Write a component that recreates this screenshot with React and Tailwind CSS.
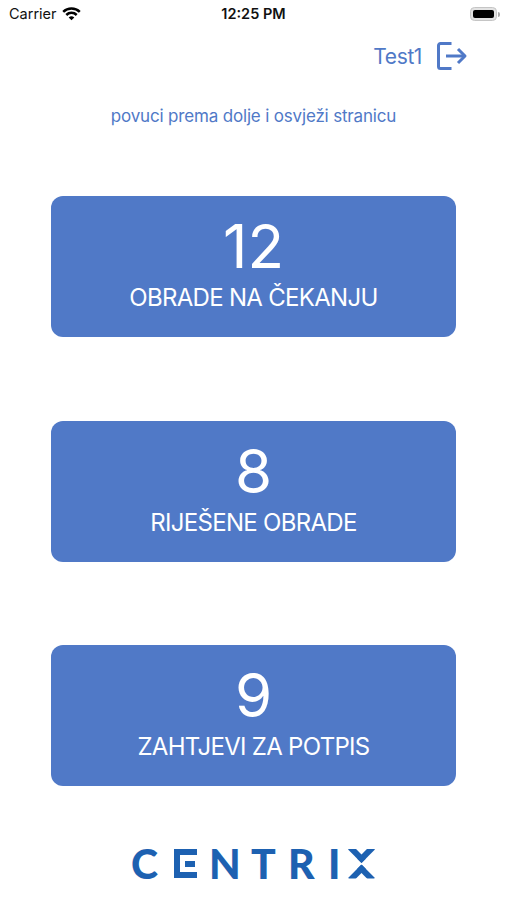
const cards = [
  { count: 12, label: 'OBRADE NA ČEKANJU' },
  { count: 8, label: 'RIJEŠENE OBRADE' },
  { count: 9, label: 'ZAHTJEVI ZA POTPIS' },
]

export default function App() {
  return (
    <div className="flex h-[900px] w-[507px] flex-col overflow-hidden bg-white font-['Inter',sans-serif] text-[#5079c7]">
      <StatusBar />

      <header className="flex h-14 items-center justify-end pr-[39px]">
        <span className="mr-[14px] text-[21px] leading-none tracking-[-0.4px]">Test1</span>
        <LogoutIcon />
      </header>

      <p className="mt-[20px] text-center text-[17px] leading-6 tracking-[-0.17px]">
        povuci prema dolje i osvježi stranicu
      </p>

      <main className="mt-[68px] flex flex-col gap-[83.7px] px-[51px]">
        {cards.map((card) => (
          <CountCard key={card.label} {...card} />
        ))}
      </main>

      <Logo />
    </div>
  )
}

function StatusBar() {
  return (
    <div className="grid h-7 shrink-0 grid-cols-3 items-center text-[14.5px] leading-none text-[#111]">
      <div className="flex items-center gap-[5px] pl-[9px]">
        <span>Carrier</span>
        <WifiIcon />
      </div>
      <span className="text-center font-semibold">12:25 PM</span>
      <div className="flex items-center justify-end gap-px pr-[7px]">
        <div className="h-[14px] w-[27px] rounded-[4.5px] border border-[#c5c5c5] bg-[#e2e2e2] p-[2px]">
          <div className="h-full rounded-[2px] bg-black" />
        </div>
        <div className="h-[5px] w-[2px] rounded-r-full bg-[#aaa]" />
      </div>
    </div>
  )
}

function CountCard({ count, label }) {
  return (
    <section className="flex h-[141px] w-[405px] flex-col items-center rounded-xl bg-[#5079c7] pt-[20px] text-white">
      <span className="text-[60px] leading-[60px]">{count}</span>
      <span className="mt-[6px] text-[24px] leading-8 tracking-[-0.7px] whitespace-nowrap">
        {label}
      </span>
    </section>
  )
}

// The E is an open frame with a loose bar, the X two facing chevrons
function Logo() {
  return (
    <div
      className="mt-[58px] ml-[131px] flex font-['Lato',sans-serif] text-[41px] leading-[40px] font-black text-[#1d61b1]"
      aria-label="CENTRIX"
    >
      <span className="w-[43px]">C</span>
      <span className="mt-[5px] mr-[12px] flex h-[29px] w-[23px] items-center justify-end border-y-[6px] border-l-[6px] border-current pr-[2px]">
        <i className="h-[6px] w-[10px] bg-current" />
      </span>
      <span className="w-[42px]">N</span>
      <span className="w-[37px]">T</span>
      <span className="w-[40px]">R</span>
      <span className="w-[20px]">I</span>
      <span className="mt-[5px] flex h-[29px] w-[27px] flex-col justify-between">
        <Chevron />
        <Chevron className="rotate-180" />
      </span>
    </div>
  )
}

function Chevron({ className = '' }) {
  return (
    <span className={`flex h-[13.5px] justify-center overflow-hidden ${className}`}>
      <i className="-mt-[9.5px] size-[19px] shrink-0 rotate-45 border-r-[6px] border-b-[6px] border-current" />
    </span>
  )
}

function WifiIcon() {
  return (
    <svg width="19" height="14" viewBox="0 0 19 14" fill="none" stroke="#000" strokeWidth="2.5">
      <path d="M1.2 4.8a11.8 11.8 0 0 1 16.6 0" />
      <path d="M4.3 8a7.4 7.4 0 0 1 10.4 0" />
      <path d="M9.5 13.3 6.7 10.5a4 4 0 0 1 5.6 0Z" fill="#000" stroke="none" />
    </svg>
  )
}

function LogoutIcon() {
  return (
    <svg
      width="32"
      height="30"
      viewBox="0 0 32 30"
      fill="none"
      stroke="currentColor"
      strokeWidth="3"
      strokeLinejoin="round"
    >
      <path d="M15.5 2.5H4.5a2 2 0 0 0-2 2v21a2 2 0 0 0 2 2h11" />
      <path d="M10 15h19" />
      <path d="m22 8 7 7-7 7" />
    </svg>
  )
}
